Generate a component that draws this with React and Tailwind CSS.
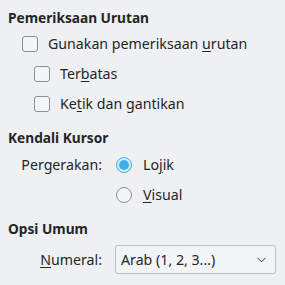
import React from 'react';

function Check() {
  return (
    <span className="w-4 h-4 rounded-[3px] border border-[#8c8f92] bg-[#f4f5f6] flex-shrink-0" />
  );
}

function Radio({ checked }) {
  return checked ? (
    <span className="w-4 h-4 rounded-full border border-[#3daee9] bg-[#d6eefb] flex items-center justify-center flex-shrink-0">
      <span className="w-[10px] h-[10px] rounded-full bg-[#3daee9]" />
    </span>
  ) : (
    <span className="w-4 h-4 rounded-full border border-[#8c8f92] bg-[#f4f5f6] flex-shrink-0" />
  );
}

export default function App() {
  return (
    <div
      className="w-[285px] h-[285px] bg-[#eff0f1] text-[#232629] text-[14.2px] overflow-hidden pt-2"
      style={{ fontFamily: '"Noto Sans", sans-serif' }}
    >
      {/* Pemeriksaan Urutan */}
      <div className="h-5 flex items-center pl-2 font-bold text-[13.7px]">Pemeriksaan Urutan</div>
      <div className="mt-px h-[30px] flex items-center pl-[22px] gap-[10px]">
        <Check />
        <span>Gunakan pemeriksaan <span className="underline underline-offset-2">u</span>rutan</span>
      </div>
      <div className="h-[30px] flex items-center pl-[34px] gap-[10px]">
        <Check />
        <span>Ter<span className="underline underline-offset-2">b</span>atas</span>
      </div>
      <div className="h-[30px] flex items-center pl-[34px] gap-[10px]">
        <Check />
        <span>Ke<span className="underline underline-offset-2">t</span>ik dan gantikan</span>
      </div>

      {/* Kendali Kursor */}
      <div className="mt-[9px] h-5 flex items-center pl-2 font-bold text-[13.7px]">Kendali Kursor</div>
      <div className="mt-0.5 grid grid-cols-[94px_1fr] gap-x-[14px] pl-2">
        <div className="h-[30px] flex items-center justify-end">Pergerakan:</div>
        <div className="h-[30px] flex items-center gap-[11px]">
          <Radio checked />
          <span>Lo<span className="underline underline-offset-2">j</span>ik</span>
        </div>
        <div />
        <div className="h-[30px] flex items-center gap-[11px]">
          <Radio />
          <span><span className="underline underline-offset-2">V</span>isual</span>
        </div>
      </div>

      {/* Opsi Umum */}
      <div className="mt-[9px] h-5 flex items-center pl-2 font-bold text-[13.7px]">Opsi Umum</div>
      <div className="mt-1.5 grid grid-cols-[94px_1fr] gap-x-[13px] pl-2">
        <div className="h-[29px] flex items-center justify-end">
          <span><span className="underline underline-offset-2">N</span>umeral:</span>
        </div>
        <div className="w-[161px] h-[29px] rounded-[3px] border border-[#bcbebf] bg-[#f3f4f5] flex items-center justify-between pl-[5px] pr-[9px]">
          <span>Arab (1, 2, 3...)</span>
          <svg width="9" height="6" viewBox="0 0 9 6" fill="none">
            <path d="M0.5 0.8 L4.5 4.8 L8.5 0.8" stroke="#31363b" strokeWidth="1" />
          </svg>
        </div>
      </div>
    </div>
  );
}
